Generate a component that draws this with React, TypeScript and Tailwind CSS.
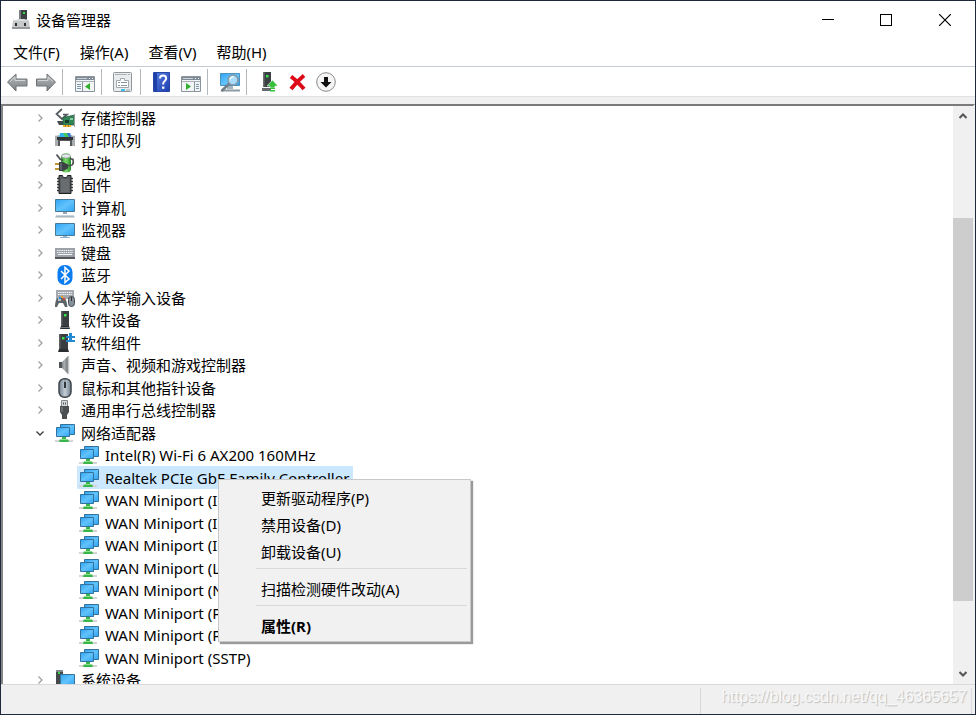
import { ReactNode, useState } from 'react';

type IconProps = { children: ReactNode };

const Icon = ({ children }: IconProps) => (
  <svg className="block h-5 w-5 shrink-0 overflow-visible" viewBox="0 0 20 20" aria-hidden="true">
    {children}
  </svg>
);

// shared gradients
const Defs = () => (
  <svg className="absolute h-0 w-0" aria-hidden="true">
    <defs>
      <linearGradient id="screen" x1="0" y1="0" x2="1" y2="1">
        <stop offset="0" stopColor="#2fa3f5" />
        <stop offset="0.5" stopColor="#62c3fc" />
        <stop offset="1" stopColor="#2ea4f6" />
      </linearGradient>
      <linearGradient id="steel" x1="0" y1="0" x2="0" y2="1">
        <stop offset="0" stopColor="#b9bcbf" />
        <stop offset="1" stopColor="#7c7f82" />
      </linearGradient>
      <linearGradient id="cone" x1="0" y1="0" x2="1" y2="0">
        <stop offset="0" stopColor="#5d6265" />
        <stop offset="0.6" stopColor="#a9adb0" />
        <stop offset="1" stopColor="#6e7376" />
      </linearGradient>
      <linearGradient id="help" x1="0" y1="0" x2="1" y2="1">
        <stop offset="0" stopColor="#5a7fe0" />
        <stop offset="1" stopColor="#1b3fb0" />
      </linearGradient>
      <linearGradient id="mouse" x1="0" y1="0" x2="1" y2="0">
        <stop offset="0" stopColor="#71808e" />
        <stop offset="0.5" stopColor="#c3ced8" />
        <stop offset="1" stopColor="#71808e" />
      </linearGradient>
      <linearGradient id="cell" x1="0" y1="0" x2="1" y2="0">
        <stop offset="0" stopColor="#2c9a2c" />
        <stop offset="0.5" stopColor="#7fdc6c" />
        <stop offset="1" stopColor="#208a24" />
      </linearGradient>
    </defs>
  </svg>
);

const AppIcon = () => (
  <Icon>
    <path d="M7 0h8v11H7z" fill="#3c4143" />
    <path d="M7 0h2v11H7z" fill="#7b8082" />
    <path d="M11 2h2v2h-2z" fill="#35d845" />
    <path d="M1 10h4v-1h8v1h4l1 9H0z" fill="#c6c8ca" />
    <path d="M0 17h18v2H0z" fill="#96999b" />
    <path d="M3 13h2v3H3zM12 13h2v3h-2z" fill="#2d3032" />
    <path d="M1 10h16" stroke="#eceded" />
  </Icon>
);

const BackIcon = () => (
  <Icon>
    <path d="M-.5 10 8 2v5h11v7H8v5z" fill="url(#steel)" stroke="#6f7274" strokeLinejoin="round" />
    <path d="M2 9.5 7 5v3.5h10" fill="none" stroke="#d2d4d5" />
  </Icon>
);

const ForwardIcon = () => (
  <Icon>
    <path d="M19.5 10 11 2v5H.5v7H11v5z" fill="url(#steel)" stroke="#6f7274" strokeLinejoin="round" />
    <path d="M2 8.500h10V5l5 4.500" fill="none" stroke="#d2d4d5" />
  </Icon>
);

const PaneIcon = ({ right }: { right?: boolean }) => (
  <Icon>
    <path d="M.5 4.500h19v15H.5z" fill="#f2f4f5" stroke="#8b959e" />
    <path d="M1 5h18v3H1z" fill="#7e8a95" />
    <path d="M2 6.500h10" stroke="#c9d0d6" />
    <path d="M14 6h1v1h-1zM17 6h1v1h-1z" fill="#fff" />
    <path d="M1 9.500h18" stroke="#a6afb7" />
    {right ? (
      <>
        <path d="M13.500 10v9" stroke="#8b959e" />
        <path d="M15 12.500h3M15 14.500h3M15 16.500h3" stroke="#7d95ad" />
        <path d="M5 11v7l5-3.500z" fill="#2fb02c" />
      </>
    ) : (
      <>
        <path d="M7.500 10v9" stroke="#8b959e" />
        <path d="M2 12.500h4M2 14.500h4M2 16.500h4" stroke="#7d95ad" />
        <path d="M15 11v7l-5-3.500z" fill="#2fb02c" />
      </>
    )}
  </Icon>
);

const PropertiesIcon = () => (
  <Icon>
    <rect x="-.5" y=".5" width="18" height="19" rx="1" fill="#e9ebed" stroke="#8f969c" />
    <path d="M1 2.500h12M14 2.500h2" stroke="#aab0b5" />
    <path d="M2.500 8.500h4v-2h4v2h4v7h-12z" fill="#fff" stroke="#a0a8ae" />
    <path d="M4 10.500h2M4 13.500h2M7 10.500h6M7 13.500h6" stroke="#8795a1" />
    <path d="M7 17h4v2H7z" fill="#3fbfee" />
    <path d="M12 17h4v2h-4z" fill="#c3c8cc" />
  </Icon>
);

const HelpIcon = () => (
  <Icon>
    <path d="M.5.500h16v19H.500z" fill="url(#help)" stroke="#2546a4" />
    <path d="M1 1h3v18H1z" fill="#1d3fa8" />
    <path
      d="M7 6.500C7 4 8.500 3.500 10 3.500s3.200 1 3.200 3c0 2.300-3 2.500-3 5v1"
      fill="none"
      stroke="#fff"
      strokeWidth="2"
    />
    <path d="M9 14.500h2.400v2.300H9z" fill="#fff" />
  </Icon>
);

const ScanIcon = () => (
  <Icon>
    <path d="M.5 1.500h19v12H.5z" fill="url(#screen)" stroke="#4b93bd" />
    <path d="M7 14h6v3H7z" fill="#a7b3bc" />
    <path d="M2 18.500h18" stroke="#8d9aa3" strokeWidth="2" />
    <path d="M9.500 11.500 2 18.500" stroke="#6f7e89" strokeWidth="2.500" strokeLinecap="round" />
    <circle cx="13" cy="8" r="5" fill="#bfe5fb" fillOpacity=".8" stroke="#8796a2" strokeWidth="1.500" />
    <path d="M10 7c.5-1.500 2-2.300 3.500-2.200" fill="none" stroke="#fff" strokeWidth="1.200" />
  </Icon>
);

const UpdateDriverIcon = () => (
  <Icon>
    <path d="M4 0h8v15H4z" fill="#3b4043" />
    <path d="M4 0h1.500v15H4z" fill="#6c7174" />
    <path d="M7 3h2.500v2.500H7z" fill="#3be04a" />
    <path d="M3 16h9v3H3z" fill="#676c6f" />
    <path d="m13.500 8 5.500 6h-3v2h-5v-2H8z" fill="#35bf3a" stroke="#fff" strokeWidth=".6" />
    <path d="M11 16h5v1h-5zM11 18h5v1.500h-5z" fill="#35bf3a" />
  </Icon>
);

const RemoveIcon = () => (
  <Icon>
    <path d="M4 4.500C8 7.500 13.500 13 17 17M17 3.500C12 7.500 7.500 12.500 4 17" stroke="#dd0a18" strokeWidth="4" fill="none" />
  </Icon>
);

const DisableIcon = () => (
  <Icon>
    <circle cx="11" cy="10" r="9.300" fill="#f5f5f5" stroke="#86898b" />
    <path d="M9 5h4v5h3.500L11 15.500 5.500 10H9z" fill="#111" />
  </Icon>
);

const StorageIcon = () => (
  <Icon>
    <path d="m7 1-5.500 5L7 11l5-4.500H8" fill="none" stroke="#555b5f" strokeWidth="1.700" />
    <path d="M2 13h7v4H4z" fill="#44494c" />
    <path d="M8 9.500 19.500 7v10H8z" fill="#2f8555" stroke="#27583f" strokeWidth=".7" />
    <path d="M19.500 6v13" stroke="#999fa2" />
    <path d="M10 12h4v3h-4z" fill="#173d2c" />
    <path d="M15 10h3v2h-3z" fill="#90cbaa" />
    <path d="M8 17h8v2H8z" fill="#f2b62c" />
    <path d="M10.500 17v2M13.500 17v2" stroke="#a87612" />
  </Icon>
);

const PrinterIcon = () => (
  <Icon>
    <path d="M5 3h10l1 4H4z" fill="#2db3ea" />
    <path d="M8 3h4l2 4h-4z" fill="#47c65c" />
    <path d="M12 3h3l1 4h-2z" fill="#3072d9" />
    <path d="M0 5h4v2h12V5h4v11H0z" fill="#a9adb0" />
    <path d="M2 7h16v3H2z" fill="#303437" />
    <path d="M3 10h14v6H3z" fill="#53585b" />
    <path d="M5 11h10v5H5z" fill="#fff" />
    <path d="M0 5.500h3M17 5.500h3" stroke="#dfe1e2" />
  </Icon>
);

const BatteryIcon = () => (
  <Icon>
    <path d="M7 2.500c0-3 8-3 8 0l1 1v13c0 4-10 4-10 0v-13z" fill="url(#cell)" />
    <ellipse cx="11" cy="3" rx="4.500" ry="2" fill="#e4e8ea" stroke="#90979b" strokeWidth=".7" />
    <path d="M1.500 1.500 5 6l3 1.500M12 12.500c6 1 7-1.500 6-6l-3-1" fill="none" stroke="#4c5154" strokeWidth="1.700" />
    <path d="M0 11h5M0 16h5" stroke="#bd942f" strokeWidth="1.800" />
    <path d="M4 9h4l5 2.500v4L8 18H4z" fill="#3d4245" />
    <path d="M6 10v7" stroke="#7d8487" />
  </Icon>
);

const FirmwareIcon = () => (
  <Icon>
    <path
      d="M2 3.500h16M2 6.500h16M2 9.500h16M2 12.500h16M2 15.500h16"
      stroke="#3c3f42"
      strokeWidth="1.700"
    />
    <path d="M4 .500h3.500c0 3 5 3 5 0H16v18H4z" fill="#5b5e61" stroke="#1c1e1f" />
    <path d="M6 4h8v13H6z" fill="#6a6d70" />
  </Icon>
);

const ComputerIcon = () => (
  <Icon>
    <path d="M.5 1.500h19v12H.5z" fill="url(#screen)" stroke="#46799a" />
    <path d="M8 14h4v2H8z" fill="#98a7b2" />
    <path d="M1 18h18l1 1.500H0z" fill="#a9b6c0" />
    <path d="M1 17.500h18" stroke="#c9d4dc" />
  </Icon>
);

const MonitorIcon = () => (
  <Icon>
    <path d="M.5 3.500h19v12H.5z" fill="url(#screen)" stroke="#46799a" />
    <path d="M8 16h4v1H8zM5 17h10v1H5z" fill="#8eb3cb" />
  </Icon>
);

const KeyboardIcon = () => (
  <Icon>
    <path d="M0 5h20v11H0z" fill="#9ba1a6" />
    <path d="M0 14h20v2H0z" fill="#53585c" />
    <path d="M2 7.500h16M2 9.500h16" stroke="#f4f5f6" strokeDasharray="1.500 .7" />
    <path d="M3 11.500h14" stroke="#f4f5f6" />
  </Icon>
);

const BluetoothIcon = () => (
  <Icon>
    <rect x="2.500" y="0" width="15" height="20" rx="7" fill="#0a7cf0" />
    <path d="m6 6 8 8-4 3.500v-15L14 6l-8 8" fill="none" stroke="#fff" strokeWidth="1.500" />
  </Icon>
);

const HidIcon = () => (
  <Icon>
    <path d="M1 2h18v9H1z" fill="#a3a9ae" />
    <path d="M3 4.500h14M3 6.500h14" stroke="#f4f5f6" strokeDasharray="1.500 .7" />
    <path d="M0 19c0-4 1-9 3-9h6c2 0 3 5 3.500 9H10l-2-4H4l-2 4z" fill="#5d6468" />
    <path d="M3 10h3v3H3z" fill="#b7c2ca" />
    <circle cx="7" cy="9" r="1.200" fill="#e79b2c" />
    <circle cx="5" cy="10" r="1.200" fill="#2792d5" />
    <circle cx="9" cy="11" r="1.200" fill="#d84b37" />
    <rect x="13.500" y="8.500" width="6" height="10" rx="3" fill="#848f99" stroke="#464c51" />
    <path d="M16.500 9v4" stroke="#303539" />
  </Icon>
);

const DeviceIcon = () => (
  <Icon>
    <path d="M6 1h8v15H6z" fill="#3a3e41" />
    <path d="M6 1h1.500v15H6z" fill="#5d6265" />
    <path d="M9 4h2.500v2.500H9z" fill="#32e445" />
    <path d="M6 16h8l1 3H5z" fill="#2a2e31" />
    <path d="M6 17.500h8" stroke="#777c80" />
  </Icon>
);

const ComponentIcon = () => (
  <Icon>
    <path d="M4 1h9v15H4z" fill="#3a3e41" />
    <path d="M4 1h1.500v15H4z" fill="#5d6265" />
    <path d="M7 4h2.500v2.500H7z" fill="#32e445" />
    <path d="M4 16h9l1 3H3z" fill="#2a2e31" />
    <path d="M11 3h3V0h3v3h3v2h-3v2h3v2h-9V7h3V5h-3z" fill="#2389d2" />
  </Icon>
);

const SpeakerIcon = () => (
  <Icon>
    <path d="M4 7h3l6-6v18l-6-6H4z" fill="url(#cone)" />
    <path d="M4 7h3v6H4z" fill="#4f5457" />
    <path d="M13.500 1v18" stroke="#c4c8ca" strokeWidth="1.500" />
  </Icon>
);

const MouseIcon = () => (
  <Icon>
    <rect x="4" y=".700" width="12" height="18.600" rx="5.500" fill="url(#mouse)" stroke="#3e4449" strokeWidth="1.500" />
    <rect x="9" y="4" width="2" height="6" fill="#30363b" />
    <path d="M10 1v3" stroke="#6a747c" />
  </Icon>
);

const UsbIcon = () => (
  <Icon>
    <path d="M6.500.500h6v6h-6z" fill="#d6d8d9" stroke="#84888a" />
    <path d="M8 2.500h1v2H8zM10 2.500h1v2h-1z" fill="#4e5254" />
    <path d="M5 6h9v6l-2 3v4h-5v-4l-2-3z" fill="#4b4f51" />
    <path d="M7 7v5" stroke="#8a8e90" />
  </Icon>
);

const NetworkIcon = () => (
  <Icon>
    <path d="M5.500 1.500h14v10h-14z" fill="url(#screen)" stroke="#33729a" />
    <path d="M1.500 4.500h13v9h-13z" fill="url(#screen)" stroke="#33729a" />
    <path d="M0 17h18v2H0z" fill="#d3d5d6" />
    <path d="M7 14h4v2h2l1 3H4l1-3h2z" fill="#39b54a" />
    <path d="M5 16.500h8" stroke="#8ae08c" />
  </Icon>
);

const SystemIcon = () => (
  <Icon>
    <path d="M1 0h7v16H1z" fill="#46494c" />
    <path d="M1 0h7v2H1z" fill="#85898c" />
    <path d="M3 2h2v2H3z" fill="#32d445" />
    <path d="M5.500 4.500h14v11h-14z" fill="url(#screen)" stroke="#33729a" />
  </Icon>
);

const Chevron = ({ open }: { open?: boolean }) => (
  <svg className="block h-2 w-2" viewBox="0 0 8 8" fill="none" aria-hidden="true">
    {open ? (
      <path d="M.5 2.500 4 6l3.500-3.500" stroke="#404040" strokeWidth="1.400" />
    ) : (
      <path d="M2.500.500 6 4 2.500 7.500" stroke="#a0a0a0" strokeWidth="1.300" />
    )}
  </svg>
);

const menus = ['文件(F)', '操作(A)', '查看(V)', '帮助(H)'];

const toolbar = [
  [
    { label: '后退', icon: <BackIcon /> },
    { label: '前进', icon: <ForwardIcon /> },
  ],
  [{ label: '显示/隐藏控制台树', icon: <PaneIcon /> }],
  [{ label: '属性', icon: <PropertiesIcon /> }],
  [
    { label: '帮助', icon: <HelpIcon /> },
    { label: '显示/隐藏操作窗格', icon: <PaneIcon right /> },
  ],
  [{ label: '扫描检测硬件改动', icon: <ScanIcon /> }],
  [
    { label: '更新驱动程序', icon: <UpdateDriverIcon /> },
    { label: '卸载设备', icon: <RemoveIcon /> },
    { label: '禁用设备', icon: <DisableIcon /> },
  ],
];

const rows: { name: string; icon?: ReactNode; open?: boolean }[] = [
  { name: '存储控制器', icon: <StorageIcon /> },
  { name: '打印队列', icon: <PrinterIcon /> },
  { name: '电池', icon: <BatteryIcon /> },
  { name: '固件', icon: <FirmwareIcon /> },
  { name: '计算机', icon: <ComputerIcon /> },
  { name: '监视器', icon: <MonitorIcon /> },
  { name: '键盘', icon: <KeyboardIcon /> },
  { name: '蓝牙', icon: <BluetoothIcon /> },
  { name: '人体学输入设备', icon: <HidIcon /> },
  { name: '软件设备', icon: <DeviceIcon /> },
  { name: '软件组件', icon: <ComponentIcon /> },
  { name: '声音、视频和游戏控制器', icon: <SpeakerIcon /> },
  { name: '鼠标和其他指针设备', icon: <MouseIcon /> },
  { name: '通用串行总线控制器', icon: <UsbIcon /> },
  { name: '网络适配器', icon: <NetworkIcon />, open: true },
  { name: 'Intel(R) Wi-Fi 6 AX200 160MHz' },
  { name: 'Realtek PCIe GbE Family Controller' },
  { name: 'WAN Miniport (IKEv2)' },
  { name: 'WAN Miniport (IP)' },
  { name: 'WAN Miniport (IPv6)' },
  { name: 'WAN Miniport (L2TP)' },
  { name: 'WAN Miniport (Network Monitor)' },
  { name: 'WAN Miniport (PPPOE)' },
  { name: 'WAN Miniport (PPTP)' },
  { name: 'WAN Miniport (SSTP)' },
  { name: '系统设备', icon: <SystemIcon /> },
];

const MenuItem = ({ children, bold }: { children: string; bold?: boolean }) => (
  <button role="menuitem" className={`block h-[27px] w-full pl-[42px] text-left hover:bg-[#91c9f7] ${bold ? 'font-bold' : ''}`}>
    {children}
  </button>
);

const MenuLine = () => <hr className="mt-[3px] mr-[3px] mb-[6px] ml-[37px] border-[#d9d9d9]" />;

export default function App() {
  const [selected, setSelected] = useState('Realtek PCIe GbE Family Controller');

  return (
    <div className="flex h-screen flex-col border border-[#1d2a3c] bg-white font-['Noto_Sans','Noto_Sans_CJK_SC',sans-serif] text-[15px] leading-[22px] text-black">
      <Defs />
      <header className="flex h-[37px] shrink-0 items-center pl-[11px]">
        <AppIcon />
        <h1 className="ml-1 flex-1">设备管理器</h1>
        <button aria-label="最小化" className="flex h-full w-[58px] items-center justify-center">
          <span className="h-px w-3 bg-black" />
        </button>
        <button aria-label="最大化" className="flex h-full w-[58px] items-center justify-center">
          <span className="h-3 w-3 border border-black" />
        </button>
        <button aria-label="关闭" className="flex h-full w-[60px] items-center justify-center">
          <svg className="h-3 w-3" viewBox="0 0 12 12" aria-hidden="true">
            <path d="m0 0 12 12M12 0 0 12" stroke="#000" strokeWidth="1.200" />
          </svg>
        </button>
      </header>

      <nav className="flex h-[28px] shrink-0 items-center gap-5 pl-3">
        {menus.map((m) => (
          <button key={m}>{m}</button>
        ))}
      </nav>

      <div className="flex h-[31px] shrink-0 items-center border-t border-b border-t-[#c3ccd4] border-b-[#e2e2e2] pl-[7px]">
        {toolbar.map((group, i) => (
          <div key={i} className="flex items-center">
            {i > 0 && <span className="mr-3 ml-[6px] h-[26px] w-px bg-[#b4b8bc]" />}
            <div className="flex gap-2">
              {group.map((b) => (
                <button key={b.label} aria-label={b.label}>
                  {b.icon}
                </button>
              ))}
            </div>
          </div>
        ))}
      </div>

      <div className="h-[7px] shrink-0 bg-[#f0f0f0]" />

      <main className="relative flex min-h-0 flex-1 border-t-2 border-r-2 border-l-2 border-t-[#7b7b7b] border-r-[#f0f0f0] border-l-[#858585]">
        <ul role="tree" aria-label="设备" className="min-w-0 flex-1 overflow-hidden pl-[33px]">
          {rows.map((row) => (
            <li key={row.name} role="treeitem" className="flex items-center odd:h-[23px] even:h-[22px]">
              {row.icon ? (
                <>
                  <button aria-label={`展开 ${row.name}`} className="mr-[11px]">
                    <Chevron open={row.open} />
                  </button>
                  {row.icon}
                  <span className="ml-[6px] whitespace-nowrap">{row.name}</span>
                </>
              ) : (
                <button
                  onClick={() => setSelected(row.name)}
                  className={`ml-[41px] flex h-full items-center gap-[6px] pr-1 pl-[2px] whitespace-nowrap ${selected === row.name ? 'bg-[#cce8ff]' : ''}`}
                >
                  <NetworkIcon />
                  {row.name}
                </button>
              )}
            </li>
          ))}
        </ul>

        <div className="flex w-5 flex-col bg-[#f0f0f0]">
          <button aria-label="向上滚动" className="flex h-5 items-center justify-center">
            <svg className="h-2 w-2" viewBox="0 0 8 8" fill="none" aria-hidden="true">
              <path d="M.5 6 4 2.500 7.500 6" stroke="#555" strokeWidth="2" />
            </svg>
          </button>
          <div className="flex flex-1 flex-col">
            <div className="flex-[92]" />
            <div className="flex-[382] bg-[#cdcdcd]" />
            <div className="flex-[63]" />
          </div>
          <button aria-label="向下滚动" className="flex h-5 items-center justify-center">
            <svg className="h-2 w-2" viewBox="0 0 8 8" fill="none" aria-hidden="true">
              <path d="M.5 2 4 5.500 7.500 2" stroke="#555" strokeWidth="2" />
            </svg>
          </button>
        </div>

        <div
          role="menu"
          className="absolute top-[373px] left-[215px] w-[253px] border border-[#c8c8c8] bg-[#f1f1f1] pt-1 pb-[2px] shadow-[2px_2px_1px_#9a9a9a]"
        >
          <MenuItem>更新驱动程序(P)</MenuItem>
          <MenuItem>禁用设备(D)</MenuItem>
          <MenuItem>卸载设备(U)</MenuItem>
          <MenuLine />
          <MenuItem>扫描检测硬件改动(A)</MenuItem>
          <MenuLine />
          <MenuItem bold>属性(R)</MenuItem>
        </div>
      </main>

      <footer className="flex h-[30px] shrink-0 border-t border-[#d9d9d9] bg-[#f0f0f0] pt-[3px]">
        <div className="flex-1" />
        <div className="w-[272px] border-r border-l border-[#d9d9d9] pr-1 text-right font-['Liberation_Sans',sans-serif] text-[16px] leading-[18px] whitespace-nowrap text-[#f8f8f8] [text-shadow:1px_1px_1px_#bdbdbd]">
          https://blog.csdn.net/qq_46365657
        </div>
        <div className="w-[3px]" />
      </footer>
    </div>
  );
}
